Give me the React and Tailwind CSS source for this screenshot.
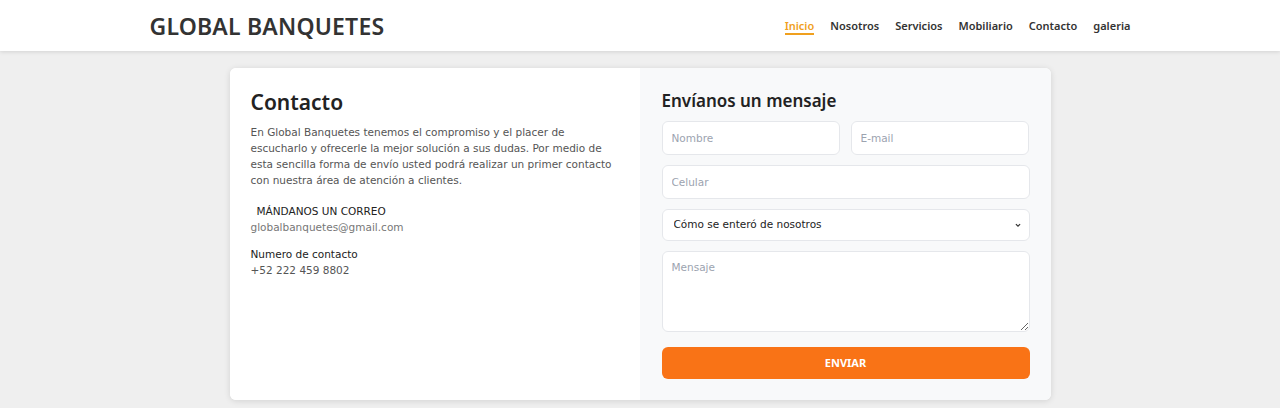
import React from 'react'

const navItems = ['Inicio', 'Nosotros', 'Servicios', 'Mobiliario', 'Contacto', 'galeria']

const inputCls =
  'h-[34px] rounded-md border border-[#e5e7eb] bg-white px-[9px] text-[10.5px] placeholder:text-[#9ca3af] outline-none'

export default function App() {
  return (
    <div className="min-h-screen bg-[#efefef] font-['DejaVu_Sans',sans-serif]">
      {/* Header */}
      <header className="h-[51px] bg-white shadow-[0_1px_4px_rgba(0,0,0,0.12)]">
        <div className="w-[981px] mx-auto h-full flex items-center justify-between">
          <h1 className="font-['Noto_Sans',sans-serif] text-[23px] font-semibold text-[#333] tracking-[0.2px] leading-[26px]">
            GLOBAL BANQUETES
          </h1>
          <nav className="flex items-center gap-[16px] font-['Noto_Sans',sans-serif] text-[11px] font-semibold text-[#333] pt-[2px]">
            {navItems.map((item, i) => (
              <a
                key={item}
                href="#"
                className={
                  i === 0
                    ? 'text-[#f0a01e] border-b-2 border-[#f0a01e] leading-[14px]'
                    : 'leading-[14px] border-b-2 border-transparent'
                }
              >
                {item}
              </a>
            ))}
          </nav>
        </div>
      </header>

      {/* Card */}
      <main className="pt-[17px]">
        <div className="w-[821px] h-[332px] mx-auto flex rounded-md overflow-hidden bg-white shadow-[0_1px_6px_rgba(0,0,0,0.12)]">
          {/* Left */}
          <div className="w-[410px] bg-white pl-[21px] pr-[20px] pt-[22px]">
            <h2 className="font-['Noto_Sans',sans-serif] text-[21px] font-semibold text-[#222] leading-[24px]">Contacto</h2>
            <p className="mt-[10px] text-[10.5px] leading-[16px] text-[#555]">
              En Global Banquetes tenemos el compromiso y el placer de escucharlo y ofrecerle la mejor solución a sus dudas. Por medio de esta sencilla forma de envío usted podrá realizar un primer contacto con nuestra área de atención a clientes.
            </p>
            <div className="mt-[15px] text-[10.5px] leading-[16px]">
              <p className="text-[#222] pl-[6px]">MÁNDANOS UN CORREO</p>
              <p className="text-[#777]">globalbanquetes@gmail.com</p>
            </div>
            <div className="mt-[11px] text-[10.5px] leading-[16px]">
              <p className="text-[#222]">Numero de contacto</p>
              <p className="text-[#555]">+52 222 459 8802</p>
            </div>
          </div>

          {/* Right */}
          <div className="w-[411px] bg-[#f8f9fa] pl-[22px] pr-[21px] pt-[22px]">
            <h3 className="font-['Noto_Sans',sans-serif] text-[17px] font-semibold text-[#222] leading-[21px]">
              Envíanos un mensaje
            </h3>
            <form className="mt-[10px] flex flex-col">
              <div className="flex gap-[11px]">
                <input placeholder="Nombre" className={`w-[178px] ${inputCls}`} />
                <input placeholder="E-mail" className={`w-[178px] ${inputCls}`} />
              </div>
              <input placeholder="Celular" className={`mt-[10px] w-full ${inputCls}`} />
              <div className="mt-[10px] relative">
                <select className="appearance-none w-full h-[32px] rounded-md border border-[#e5e7eb] bg-white px-[11px] text-[10.5px] text-[#222] outline-none">
                  <option>Cómo se enteró de nosotros</option>
                </select>
                <svg
                  className="absolute right-[9px] top-[13px] w-[6px] h-[6px]"
                  viewBox="0 0 10 10"
                  fill="none"
                  stroke="#333"
                  strokeWidth="2"
                >
                  <path d="M1.5 3.5 L5 7 L8.5 3.5" />
                </svg>
              </div>
              <textarea
                placeholder="Mensaje"
                className="mt-[10px] w-full h-[81px] rounded-md border border-[#e5e7eb] bg-white px-[9px] py-[8px] text-[10.5px] placeholder:text-[#9ca3af] outline-none resize-y"
              />
              <button
                type="button"
                className="mt-[15px] w-full h-[32px] rounded-md bg-[#f97316] text-white font-['Noto_Sans',sans-serif] text-[11px] font-bold"
              >
                ENVIAR
              </button>
            </form>
          </div>
        </div>
      </main>
    </div>
  )
}
